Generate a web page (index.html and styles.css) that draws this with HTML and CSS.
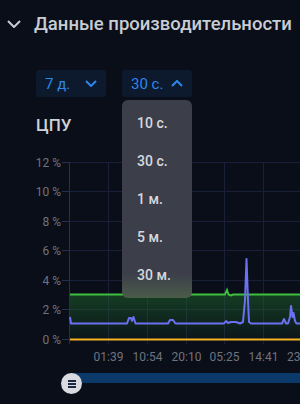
FILE: index.html
```html
<!DOCTYPE html>
<html lang="ru">
<head>
    <meta charset="UTF-8">
    <meta name="viewport" content="width=device-width, initial-scale=1.0">
    <title>Данные производительности</title>
    <link rel="stylesheet" href="styles.css">
</head>
<body>

    <section class="panel">
        <header class="panel-header">
            <svg class="collapse-icon" width="14" height="8" viewBox="0 0 14 8">
                <path d="M1 1 L7 7 L13 1" fill="none" stroke="#c9ccd2" stroke-width="2"/>
            </svg>
            <h2>Данные производительности</h2>
        </header>

        <div class="controls">
            <div class="select">
                <button class="select-btn">
                    <span>7 д.</span>
                    <svg width="12" height="7" viewBox="0 0 12 7">
                        <path d="M1 1 L6 6 L11 1" fill="none" stroke="#2d86ea" stroke-width="2"/>
                    </svg>
                </button>
            </div>
            <div class="select open">
                <button class="select-btn">
                    <span>30 с.</span>
                    <svg width="12" height="7" viewBox="0 0 12 7">
                        <path d="M1 6 L6 1 L11 6" fill="none" stroke="#2d86ea" stroke-width="2"/>
                    </svg>
                </button>
                <ul class="select-menu">
                    <li>10 с.</li>
                    <li>30 с.</li>
                    <li>1 м.</li>
                    <li>5 м.</li>
                    <li>30 м.</li>
                </ul>
            </div>
        </div>

        <h3 class="chart-title">ЦПУ</h3>

        <!-- chart uses page coordinates through the viewBox -->
        <svg class="chart" width="300" height="215" viewBox="0 150 300 215">
            <defs>
                <linearGradient id="green-fill" x1="0" y1="0" x2="0" y2="1">
                    <stop offset="0" stop-color="#1f6b2c" stop-opacity="0.5"/>
                    <stop offset="1" stop-color="#1f6b2c" stop-opacity="0.08"/>
                </linearGradient>
            </defs>

            <g class="grid">
                <line x1="69" y1="162.5" x2="300" y2="162.5"/>
                <line x1="69" y1="191.5" x2="300" y2="191.5"/>
                <line x1="69" y1="221.5" x2="300" y2="221.5"/>
                <line x1="69" y1="250.5" x2="300" y2="250.5"/>
                <line x1="69" y1="280.5" x2="300" y2="280.5"/>
                <line x1="69" y1="309.5" x2="300" y2="309.5"/>
                <line x1="108.5" y1="162" x2="108.5" y2="344"/>
                <line x1="147.5" y1="162" x2="147.5" y2="344"/>
                <line x1="186.5" y1="162" x2="186.5" y2="344"/>
                <line x1="224.5" y1="162" x2="224.5" y2="344"/>
                <line x1="263.5" y1="162" x2="263.5" y2="344"/>
            </g>

            <g class="axis">
                <line x1="69.5" y1="162" x2="69.5" y2="344"/>
                <line x1="62" y1="162.5" x2="69" y2="162.5"/>
                <line x1="62" y1="191.5" x2="69" y2="191.5"/>
                <line x1="62" y1="221.5" x2="69" y2="221.5"/>
                <line x1="62" y1="250.5" x2="69" y2="250.5"/>
                <line x1="62" y1="280.5" x2="69" y2="280.5"/>
                <line x1="62" y1="309.5" x2="69" y2="309.5"/>
                <line x1="62" y1="339.5" x2="69" y2="339.5"/>
            </g>

            <g class="y-labels">
                <text x="61" y="166.5">12 %</text>
                <text x="61" y="195.5">10 %</text>
                <text x="61" y="225.5">8 %</text>
                <text x="61" y="254.5">6 %</text>
                <text x="61" y="284.5">4 %</text>
                <text x="61" y="313.5">2 %</text>
                <text x="61" y="343.5">0 %</text>
            </g>

            <g class="x-labels">
                <text x="108.5" y="361">01:39</text>
                <text x="147.5" y="361">10:54</text>
                <text x="186.5" y="361">20:10</text>
                <text x="224.5" y="361">05:25</text>
                <text x="263.5" y="361">14:41</text>
                <text x="302" y="361">23:56</text>
            </g>

            <rect x="70" y="295" width="230" height="44" fill="url(#green-fill)"/>
            <path class="line-green" d="M70 294.5 H225 L227 290 L228.5 294.5 L231 295.5 L233 294.5 H300"/>
            <path class="line-blue" d="M70 317 L71 323.5 H127 L129 318 L131 318 L132 321 L133.5 317 L135.5 323.5 H168 L170 320 L173 320 L175.5 323.5 H224 L226 321 L228 323 L231 322 L236 322 L240 323.5 L243 322 L245 300 L246.5 259 L248 300 L249 322 L251 323.5 H282 L284 319 L286 323.5 H288 L290 317 L291 306 L292.5 317 L293.5 313 L295 321 L296.5 323.5 H300"/>
            <line class="line-yellow" x1="70" y1="339.5" x2="300" y2="339.5"/>
        </svg>

        <div class="range">
            <div class="range-track"></div>
            <div class="range-thumb">
                <span></span>
                <span></span>
                <span></span>
            </div>
        </div>
    </section>

</body>
</html>
```

FILE: styles.css
```css
body {
    font-family: 'Roboto', 'Liberation Sans', sans-serif;
    background-color: #0a0e19;
    color: #c9ccd2;
    margin: 0;
    padding: 0;
    overflow: hidden;
}
.panel {
    width: 300px;
    height: 404px;
}
.panel-header {
    display: flex;
    align-items: center;
    gap: 13px;
    padding: 12px 0 0 7px;
}
.panel-header h2 {
    margin: 0;
    font-size: 18.5px;
    line-height: 24px;
    font-weight: 500;
    color: #c9ccd2;
    white-space: nowrap;
}
.collapse-icon {
    display: block;
}
.controls {
    display: flex;
    gap: 16px;
    margin: 34px 0 0 36px;
}
.select {
    position: relative;
}
.select-btn {
    display: flex;
    align-items: center;
    justify-content: space-between;
    width: 70px;
    height: 27px;
    padding: 0 9px 0 9px;
    border: none;
    border-radius: 3px;
    background-color: #0d1a2d;
    color: #2d86ea;
    font-family: inherit;
    font-size: 15px;
    cursor: pointer;
}
.select-btn svg {
    display: block;
}
.select-menu {
    position: absolute;
    top: 30px;
    left: 0;
    z-index: 2;
    width: 70px;
    margin: 0;
    padding: 4px 0;
    list-style-type: none;
    border-radius: 6px;
    background: linear-gradient(to bottom, #3c3f4a 0%, #3c3f4a 88%, #4a5c4a 100%);
}
.select-menu li {
    height: 38px;
    line-height: 38px;
    padding-left: 15px;
    font-size: 14px;
    font-weight: 500;
    color: #d6d8dd;
}
.chart-title {
    margin: 18px 0 15px 36px;
    font-size: 17px;
    line-height: 20px;
    font-weight: 500;
    color: #d0d2d6;
}
.chart {
    display: block;
}
.grid line {
    stroke: #182039;
    stroke-width: 1;
}
.axis line {
    stroke: #233157;
    stroke-width: 1;
}
.y-labels text {
    font-family: 'Roboto', sans-serif;
    font-size: 12px;
    fill: #6e737e;
    text-anchor: end;
}
.x-labels text {
    font-family: 'Roboto', sans-serif;
    font-size: 12px;
    fill: #6e737e;
    text-anchor: middle;
}
.line-green {
    fill: none;
    stroke: #3fbf3f;
    stroke-width: 2;
}
.line-blue {
    fill: none;
    stroke: #6b71f2;
    stroke-width: 2;
    stroke-linejoin: round;
}
.line-yellow {
    stroke: #f5b423;
    stroke-width: 2;
}
.range {
    position: relative;
    height: 21px;
    margin-top: 8px;
}
.range-track {
    margin: 6px 0 0 72px;
    height: 10px;
    background-color: #0b3a6a;
}
.range-thumb {
    position: absolute;
    left: 61px;
    top: 0;
    width: 21px;
    height: 21px;
    border-radius: 50%;
    background-color: #d9dbe0;
    display: flex;
    flex-direction: column;
    align-items: center;
    justify-content: center;
    gap: 1px;
}
.range-thumb span {
    display: block;
    width: 8px;
    height: 2px;
    background-color: #1b2a45;
}
```
